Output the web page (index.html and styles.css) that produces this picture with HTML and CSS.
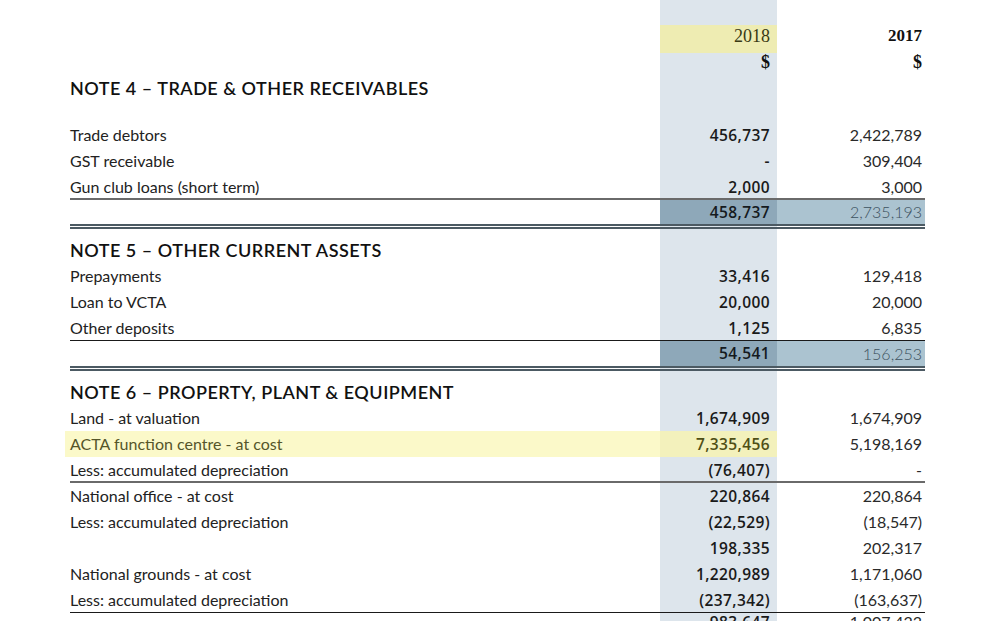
FILE: index.html
```html
<!DOCTYPE html>
<html>
<head>
<meta charset="utf-8">
<link rel="stylesheet" href="styles.css">
</head>
<body>
<div class="sheet">
  <div class="row year-row">
    <div class="lbl"></div>
    <div class="c18 yr">2018</div>
    <div class="c17 yr">2017</div>
  </div>
  <div class="row cur-row">
    <div class="lbl"></div>
    <div class="c18 cur">$</div>
    <div class="c17 cur">$</div>
  </div>
  <div class="row head"><div class="lbl">NOTE 4 – TRADE &amp; OTHER RECEIVABLES</div><div class="c18"></div><div class="c17"></div></div>
  <div class="gap g21"></div>
  <div class="row"><div class="lbl">Trade debtors</div><div class="c18">456,737</div><div class="c17">2,422,789</div></div>
  <div class="row"><div class="lbl">GST receivable</div><div class="c18">-</div><div class="c17">309,404</div></div>
  <div class="row rule2"><div class="lbl">Gun club loans (short term)</div><div class="c18">2,000</div><div class="c17">3,000</div></div>
  <div class="row total"><div class="lbl"></div><div class="c18">458,737</div><div class="c17">2,735,193</div></div>
  <div class="gap g8"></div>
  <div class="row head"><div class="lbl">NOTE 5 – OTHER CURRENT ASSETS</div><div class="c18"></div><div class="c17"></div></div>
  <div class="row"><div class="lbl">Prepayments</div><div class="c18">33,416</div><div class="c17">129,418</div></div>
  <div class="row"><div class="lbl">Loan to VCTA</div><div class="c18">20,000</div><div class="c17">20,000</div></div>
  <div class="row rule1"><div class="lbl">Other deposits</div><div class="c18">1,125</div><div class="c17">6,835</div></div>
  <div class="row total t25"><div class="lbl"></div><div class="c18">54,541</div><div class="c17">156,253</div></div>
  <div class="gap g8"></div>
  <div class="row head"><div class="lbl">NOTE 6 – PROPERTY, PLANT &amp; EQUIPMENT</div><div class="c18"></div><div class="c17"></div></div>
  <div class="row"><div class="lbl">Land - at valuation</div><div class="c18">1,674,909</div><div class="c17">1,674,909</div></div>
  <div class="row hl"><div class="lbl">ACTA function centre - at cost</div><div class="c18">7,335,456</div><div class="c17">5,198,169</div></div>
  <div class="row rule2"><div class="lbl">Less: accumulated depreciation</div><div class="c18">(76,407)</div><div class="c17">-</div></div>
  <div class="row"><div class="lbl">National office - at cost</div><div class="c18">220,864</div><div class="c17">220,864</div></div>
  <div class="row"><div class="lbl">Less: accumulated depreciation</div><div class="c18">(22,529)</div><div class="c17">(18,547)</div></div>
  <div class="row"><div class="lbl"></div><div class="c18">198,335</div><div class="c17">202,317</div></div>
  <div class="row"><div class="lbl">National grounds - at cost</div><div class="c18">1,220,989</div><div class="c17">1,171,060</div></div>
  <div class="row rule1"><div class="lbl">Less: accumulated depreciation</div><div class="c18">(237,342)</div><div class="c17">(163,637)</div></div>
  <div class="row last"><div class="lbl"></div><div class="c18">983,647</div><div class="c17">1,007,423</div></div>
</div>
</body>
</html>
```
FILE: styles.css
```css
html, body {
  margin: 0;
  padding: 0;
  background: #ffffff;
  overflow: hidden;
}
body {
  width: 1000px;
  height: 621px;
  font-family: "Lato", "Liberation Sans", sans-serif;
  color: #1c1c1c;
}
.sheet {
  margin-left: 70px;
  padding-top: 25px;
  width: 855px;
  height: 640px;
  background: linear-gradient(to right, transparent 590px, #dde5ec 590px, #dde5ec 707px, transparent 707px);
}
.row {
  display: grid;
  grid-template-columns: 590px 117px 148px;
  height: 26px;
  line-height: 26px;
}
.g21 { height: 21px; }
.g8 { height: 8px; }
.lbl {
  font-size: 16px;
  color: #222;
  white-space: nowrap;
}
.c18 {
  text-align: right;
  padding-right: 7px;
  font-family: "Open Sans", "Liberation Sans", sans-serif;
  font-weight: 600;
  font-size: 15.5px;
  letter-spacing: 0.4px;
  color: #1a1a1a;
}
.c17 {
  text-align: right;
  padding-right: 3px;
  font-weight: 400;
  font-size: 16px;
  color: #2a2a2a;
}
.year-row {
  height: 28px;
  line-height: 22px;
}
.year-row .c18 { background: #eeecb2; }
.yr {
  font-family: "Liberation Serif", serif;
  font-weight: 400;
  font-size: 18px;
  letter-spacing: 0;
}
.year-row .c18.yr { color: #3a3a14; }
.year-row .c17.yr { font-weight: 700; font-size: 17px; color: #111; }
.cur-row {
  height: 22px;
  line-height: 18px;
}
.cur {
  font-family: "Liberation Serif", serif;
  font-weight: 700;
  font-size: 18px;
  letter-spacing: 0;
  color: #111;
}
.head .lbl {
  font-size: 18px;
  font-weight: 600;
  color: #111;
  letter-spacing: 0.5px;
}
.rule2 {
  height: 24px;
  border-bottom: 2px solid #6a6a6a;
}
.rule1 {
  height: 25px;
  border-bottom: 1px solid #1a1a1a;
}
.total {
  height: 24px;
  line-height: 24px;
  border-bottom: 5px double #4c5a63;
}
.total.t25 { height: 25px; line-height: 25px; }
.total .c18 { background: #8ea8b9; color: #151a1e; }
.total .c17 { background: #abc3d0; color: #3d5260; font-weight: 300; }
.hl .lbl {
  background: #fbf9c9;
  box-shadow: -5px 0 0 #fbf9c9;
  color: #55552a;
}
.hl .c18 {
  background: #f3f1bc;
  color: #4f4f16;
}
.last {
  line-height: 18px;
}
```
